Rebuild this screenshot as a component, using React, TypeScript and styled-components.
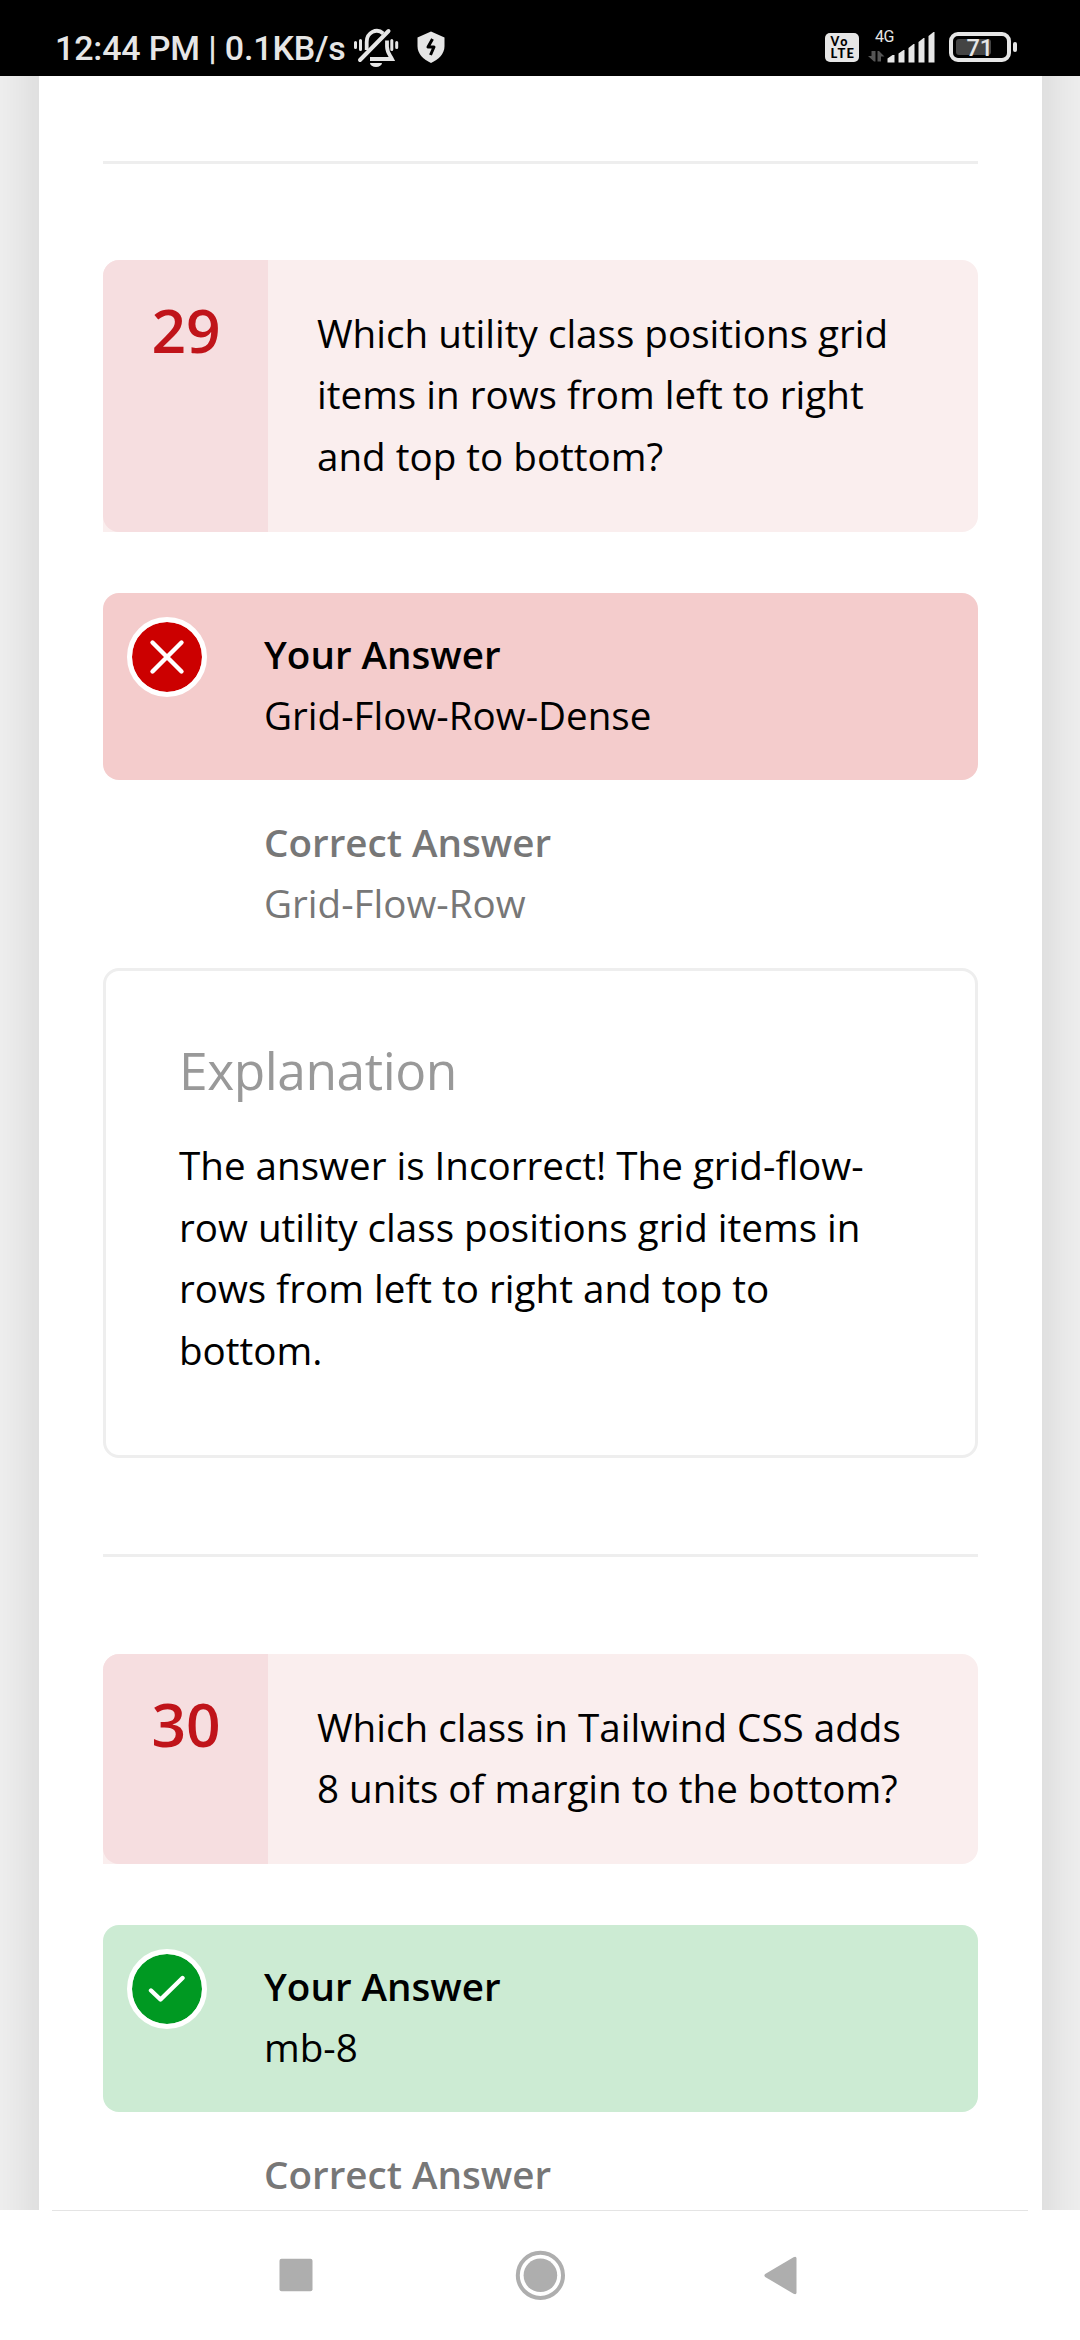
import React from "react";
import styled, { createGlobalStyle } from "styled-components";

const GlobalStyle = createGlobalStyle`
  * { box-sizing: border-box; }
  body { margin: 0; background: #f0f0f0; }
`;

const Screen = styled.div`
  width: 1080px;
  height: 2340px;
  display: flex;
  flex-direction: column;
  overflow: hidden;
  background: #f0f0f0;
  font-family: "Open Sans", "Noto Sans", sans-serif;
  color: #000;
`;

const StatusBar = styled.header`
  height: 76px;
  flex: none;
  display: flex;
  align-items: flex-start;
  justify-content: space-between;
  background: #000;
  color: #e6e6e6;
  font-family: Roboto, sans-serif;
`;

const StatusGroup = styled.div`
  display: flex;
  align-items: flex-start;
`;

const Clock = styled.span`
  padding: 28px 0 0 55px;
  width: 352px;
  font-size: 34px;
  line-height: 40px;
  font-weight: 500;
  letter-spacing: -0.15px;
  white-space: nowrap;
`;

const StatusIcon = styled.svg`
  display: block;
  flex: none;
`;

const Viewport = styled.main`
  flex: 1;
  min-height: 0;
  display: flex;
  justify-content: center;
  overflow: hidden;
`;

const Page = styled.div`
  width: 1003px;
  margin: -100px 0 -100px 1px;
  flex: none;
  padding: 185px 64px 0;
  background: #fff;
  box-shadow: 0 0 56px rgba(0, 0, 0, 0.14);
`;

const Divider = styled.hr`
  height: 3px;
  margin: 0;
  border: 0;
  background: #eee;
`;

const Block = styled.section<{ $top?: number }>`
  padding: ${(p) => p.$top ?? 96}px 0 96px;
`;

const QuestionBox = styled.div<{ $height: number }>`
  display: flex;
  height: ${(p) => p.$height}px;
  border-radius: 16px 16px 16px 0;
  background: #faeeee;
`;

const QuestionNumber = styled.div`
  width: 165px;
  flex: none;
  padding: 25px 0 0 1px;
  border-radius: 16px 0 0 16px;
  background: #f6dee0;
  color: #c0141a;
  font-size: 60.5px;
  line-height: 90px;
  font-weight: 600;
  text-align: center;
`;

const QuestionText = styled.p`
  margin: 0;
  padding: 43px 60px 0 49px;
  font-size: 38.6px;
  line-height: 61.4px;
`;

const Answer = styled.div<{ $tone?: "wrong" | "right" }>`
  display: flex;
  height: ${(p) => (p.$tone ? 187 : 188)}px;
  margin-top: ${(p) => (p.$tone ? 61 : 0)}px;
  padding: ${(p) => (p.$tone ? 24 : 25)}px 24px 0;
  border-radius: 16px;
  color: ${(p) => (p.$tone ? "#000" : "#777")};
  background: ${(p) =>
    p.$tone === "wrong" ? "#f4cccc" : p.$tone === "right" ? "#ccebd3" : "transparent"};
`;

const Mark = styled.div<{ $color?: string }>`
  width: 80px;
  height: 80px;
  flex: none;
  border-radius: 50%;
  border: 5px solid ${(p) => (p.$color ? "#fff" : "transparent")};
  background: ${(p) => p.$color || "transparent"};
  background-clip: padding-box;
  display: flex;
  align-items: center;
  justify-content: center;
`;

const AnswerText = styled.div`
  padding: 7px 0 0 57px;
  font-size: 38.6px;
  line-height: 61.4px;
`;

const AnswerLabel = styled.div`
  font-weight: 600;
`;

const Explanation = styled.div`
  height: 490px;
  padding: 63px 72px 0 73px;
  border: 3px solid #eee;
  border-radius: 16px;
`;

const ExplanationTitle = styled.h3`
  margin: 0;
  color: #999;
  font-size: 51.5px;
  line-height: 72px;
  font-weight: 400;
  letter-spacing: -0.45px;
`;

const ExplanationText = styled.p`
  margin: 29px 0 0;
  font-size: 38.6px;
  line-height: 61.5px;
`;

const NavBar = styled.nav`
  height: 130px;
  flex: none;
  display: flex;
  flex-direction: column;
  align-items: center;
  background: #fff;
`;

const NavLine = styled.div`
  width: 976px;
  height: 1px;
  background: #e4e4e4;
`;

const NavButtons = styled.div`
  width: 100%;
  display: flex;
  justify-content: center;
  gap: 184px;
  padding-top: 34px;
`;

const NavIcon = styled.svg`
  width: 60px;
  height: 60px;
  display: block;
`;

const Cross = () => (
  <svg width="36" height="36" viewBox="0 0 36 36" fill="none" stroke="#fff" strokeWidth="4.4" strokeLinecap="round">
    <path d="M3.5 3.5 32.5 32.5M32.5 3.5 3.5 32.5" />
  </svg>
);

const Check = () => (
  <svg width="38" height="38" viewBox="0 0 38 38" fill="none" stroke="#fff" strokeWidth="4.4" strokeLinecap="round" strokeLinejoin="round">
    <path d="M3 20.5 12.5 29.5 34.5 8" />
  </svg>
);

export default function App() {
  return (
    <Screen>
      <GlobalStyle />
      <StatusBar>
        <StatusGroup>
          <Clock>12:44 PM | 0.1KB/s</Clock>
          <StatusIcon width="100" height="76" viewBox="352 0 100 76" fill="#e6e6e6">
            <path d="M366.700 50V42a10 11 0 0 1 16.500-8.500M387 40.500v6c0 6 3 8.500 5 12.500H370" fill="none" stroke="#e6e6e6" strokeWidth="3.800" />
            <path d="M360 60 388.500 31" stroke="#e6e6e6" strokeWidth="4" strokeLinecap="round" />
            <path d="M370 63h12a6 4 0 0 1-12 0z" />
            <path d="M355.500 42.500v5M360.500 40.500v9M391.800 40.500v9M396.700 42.500v5" stroke="#e6e6e6" strokeWidth="3" strokeLinecap="round" />
            <path d="M431 31.500 444.500 37.500V46c0 8-6 13.500-13.500 17-7.500-3.500-13.500-9-13.500-17v-8.500z" />
            <path d="M432.500 39 428 47h6l-3.500 8" fill="none" stroke="#000" strokeWidth="3" strokeLinejoin="round" />
          </StatusIcon>
        </StatusGroup>
        <StatusIcon width="260" height="76" viewBox="820 0 260 76" fill="#e6e6e6">
          <rect x="825" y="33" width="34" height="29" rx="5" />
          <g fill="#000" fontFamily="Lato, sans-serif" fontWeight="900">
            <text x="830.500" y="46" fontSize="12.500" textLength="17">Vo</text>
            <text x="830.500" y="58" fontSize="13" textLength="23.500">LTE</text>
          </g>
          <text x="875" y="42" fontSize="16" textLength="19.500" fontFamily="Roboto, sans-serif">4G</text>
          <path d="M871.500 51h4v10.500H874L868 56h3.500zM877.500 51h1.500l5.500 5.500H881v5h-3.500z" fill="#555" />
          <path d="M887.500 62.500v-4l5-3.500h2v7.500zM898.500 62.500v-9l5-3.500h1v12.500zM908.500 62.500V48l5-4h1v18.500zM918.500 62.500V42l5-4h1v24.500zM928.500 62.500V36l5-4h1v30.500z" />
          <rect x="951" y="34" width="58" height="26" rx="7" fill="none" stroke="#e6e6e6" strokeWidth="4" />
          <rect x="956" y="39" width="35" height="16" rx="3" fill="#444" />
          <rect x="1013" y="42" width="4" height="10" rx="2" />
          <text x="966.500" y="56" fontSize="23.500" fontWeight="500" fontFamily="Roboto, sans-serif">71</text>
        </StatusIcon>
      </StatusBar>

      <Viewport>
        <Page>
          <Divider />
          <Block>
            <QuestionBox $height={272}>
              <QuestionNumber>29</QuestionNumber>
              <QuestionText>Which utility class positions grid items in rows from left to right and top to bottom?</QuestionText>
            </QuestionBox>
            <Answer $tone="wrong">
              <Mark $color="#cc0000"><Cross /></Mark>
              <AnswerText>
                <AnswerLabel>Your Answer</AnswerLabel>
                Grid-Flow-Row-Dense
              </AnswerText>
            </Answer>
            <Answer>
              <Mark />
              <AnswerText>
                <AnswerLabel>Correct Answer</AnswerLabel>
                Grid-Flow-Row
              </AnswerText>
            </Answer>
            <Explanation>
              <ExplanationTitle>Explanation</ExplanationTitle>
              <ExplanationText>
                The answer is Incorrect! The grid-flow-row utility class positions grid items in rows from left to right and top to bottom.
              </ExplanationText>
            </Explanation>
          </Block>
          <Divider />
          <Block $top={97}>
            <QuestionBox $height={210}>
              <QuestionNumber>30</QuestionNumber>
              <QuestionText>Which class in Tailwind CSS adds 8 units of margin to the bottom?</QuestionText>
            </QuestionBox>
            <Answer $tone="right">
              <Mark $color="#009922"><Check /></Mark>
              <AnswerText>
                <AnswerLabel>Your Answer</AnswerLabel>
                mb-8
              </AnswerText>
            </Answer>
            <Answer>
              <Mark />
              <AnswerText>
                <AnswerLabel>Correct Answer</AnswerLabel>
              </AnswerText>
            </Answer>
          </Block>
        </Page>
      </Viewport>

      <NavBar>
        <NavLine />
        <NavButtons>
          <NavIcon viewBox="0 0 60 60"><rect x="13.500" y="13.700" width="33" height="32.600" rx="2" fill="#aeaeae" /></NavIcon>
          <NavIcon viewBox="0 0 60 60">
            <circle cx="30.400" cy="30.300" r="22.600" fill="none" stroke="#aeaeae" strokeWidth="4" />
            <circle cx="30.400" cy="30.300" r="16.800" fill="#aeaeae" />
          </NavIcon>
          <NavIcon viewBox="0 0 60 60"><path d="M11.200 29 39.500 12.300q3-1.300 3 1.200v34q0 2.500-3 1.200L11.200 32q-1.600-1.500 0-3z" fill="#aeaeae" /></NavIcon>
        </NavButtons>
      </NavBar>
    </Screen>
  );
}
